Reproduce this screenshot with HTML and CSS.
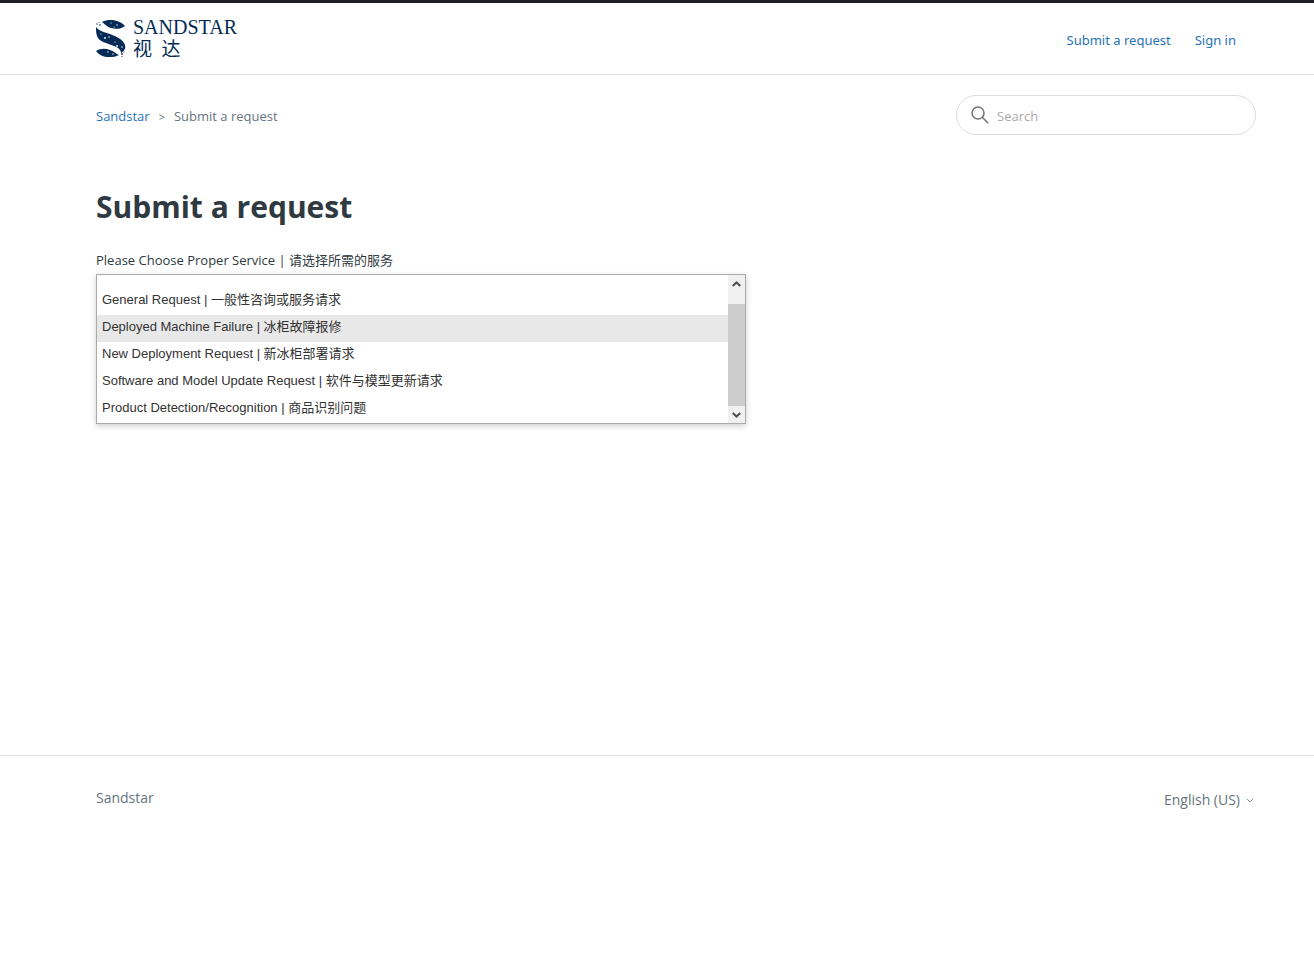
FILE: index.html
```
<!DOCTYPE html>
<html lang="en">
<head>
    <meta charset="UTF-8">
    <meta name="viewport" content="width=device-width, initial-scale=1.0">
    <title>Submit a request</title>
    <link rel="stylesheet" href="styles.css">
</head>
<body>

    <header class="header">
        <a class="logo" href="#" aria-label="Sandstar home">
            <svg class="logo-mark" viewBox="0 0 30 38" width="30" height="38" aria-hidden="true">
                <g fill="#052c56">
                    <path d="M6 2C10 0 15 -.3 19 .5C24 1.5 27 3.500 29 6C25 9 20 9.500 15 8C11 7 9 4 6 2Z"/>
                    <path d="M0 7C2 10 7 12 14 14C22 17 27 20 29 25C30 29 28 31 25 33C25 30 23 28 18 26C11 23 3 22 1 16C0 13 0 10 0 7Z"/>
                    <path d="M0 31C4 28.500 9 28 14 30C18 31 20 34 23 35C18 37.500 12 37.500 8 36.500C4 35.500 2 33.500 0 31Z"/>
                    <circle cx="1" cy="4" r=".7"/>
                    <circle cx="4" cy="5" r=".8"/>
                    <circle cx="3" cy="2.500" r=".5"/>
                    <circle cx="26" cy="34" r=".9"/>
                    <circle cx="28" cy="32" r=".6"/>
                    <circle cx="26" cy="36.500" r=".6"/>
                </g>
                <g fill="#fff">
                    <circle cx="15" cy="3" r=".6"/>
                    <circle cx="21" cy="5" r=".7"/>
                    <circle cx="18" cy="7" r=".5"/>
                    <circle cx="5" cy="14" r=".6"/>
                    <circle cx="9" cy="18" r=".9"/>
                    <circle cx="13" cy="17" r=".7"/>
                    <circle cx="19" cy="22" r=".6"/>
                    <circle cx="21" cy="26" r=".9"/>
                    <circle cx="26" cy="27" r=".7"/>
                    <circle cx="12" cy="32" r=".7"/>
                    <circle cx="17" cy="34" r=".7"/>
                </g>
            </svg>
            <span class="logo-text">
                <span class="logo-name">SANDSTAR</span>
                <span class="logo-name-cn" lang="zh">视&ensp;达</span>
            </span>
        </a>
        <nav class="user-nav">
            <a href="#">Submit a request</a>
            <a href="#">Sign in</a>
        </nav>
    </header>

    <main class="main">
        <div class="sub-nav">
            <ol class="breadcrumbs">
                <li><a href="#">Sandstar</a></li>
                <li>Submit a request</li>
            </ol>
            <form class="search" role="search">
                <svg viewBox="0 0 18 18" width="18" height="18" fill="none" stroke="#777" stroke-width="1.6" aria-hidden="true">
                    <circle cx="7" cy="7" r="6"/>
                    <path d="M11.3 11.3L17.2 17.2"/>
                </svg>
                <input type="search" placeholder="Search" aria-label="Search">
            </form>
        </div>

        <h1>Submit a request</h1>

        <form class="request-form">
            <label for="service">Please Choose Proper Service | <span lang="zh">请选择所需的服务</span></label>
            <div class="listbox">
                <select id="service" size="5">
                    <option>General Request | 一般性咨询或服务请求</option>
                    <option class="highlighted">Deployed Machine Failure | 冰柜故障报修</option>
                    <option>New Deployment Request | 新冰柜部署请求</option>
                    <option>Software and Model Update Request | 软件与模型更新请求</option>
                    <option>Product Detection/Recognition | 商品识别问题</option>
                </select>
                <div class="scrollbar">
                    <button type="button" aria-label="Scroll up">
                        <svg viewBox="0 0 9 6" width="9" height="6" fill="none" stroke="#505050" stroke-width="2"><path d="M.7 5L4.5 1.4L8.3 5"/></svg>
                    </button>
                    <div class="thumb"></div>
                    <button type="button" aria-label="Scroll down">
                        <svg viewBox="0 0 9 6" width="9" height="6" fill="none" stroke="#505050" stroke-width="2"><path d="M.7 1L4.5 4.6L8.3 1"/></svg>
                    </button>
                </div>
            </div>
        </form>
    </main>

    <footer class="footer">
        <a href="#">Sandstar</a>
        <button class="language" type="button" aria-haspopup="true">
            English (US)
            <svg viewBox="0 0 8 5" width="8" height="5" fill="none" stroke="#87929d" aria-hidden="true"><path d="M.8 .8L4 4L7.2 .8"/></svg>
        </button>
    </footer>

</body>
</html>
```

FILE: styles.css
```
* {
    box-sizing: border-box;
}

body {
    margin: 0;
    min-height: 100vh;
    border-top: 3px solid #211f26;
    background-color: #fff;
    color: #2f3941;
    font-family: "Open Sans", "Noto Sans CJK SC", sans-serif;
    font-size: 13px;
    line-height: 20px;
}

a {
    color: #1f73b7;
    text-decoration: none;
}

a:hover {
    text-decoration: underline;
}

/* Header */
.header {
    display: flex;
    align-items: center;
    justify-content: space-between;
    height: 72px;
    padding: 0 78px 0 96px;
    border-bottom: 1px solid #ddd;
}

.logo {
    display: flex;
    align-items: center;
    gap: 7px;
    color: #052c56;
}

.logo-text {
    display: flex;
    flex-direction: column;
}

.logo-name {
    font-family: "Liberation Serif", serif;
    font-size: 20px;
    line-height: 18px;
}

.logo-name-cn {
    font-family: "Noto Sans CJK SC", sans-serif;
    font-size: 19px;
    line-height: 24px;
}

.user-nav {
    display: flex;
    gap: 24px;
    padding-top: 2px;
    font-family: "Noto Sans", sans-serif;
}

/* Breadcrumbs and search */
.main {
    min-height: 680px;
    padding: 20px 58px 0 96px;
}

.sub-nav {
    display: flex;
    align-items: center;
    justify-content: space-between;
    margin-bottom: 48px;
}

.breadcrumbs {
    display: flex;
    margin: 0;
    padding: 2px 0 0;
    list-style: none;
    color: #68737d;
}

.breadcrumbs li + li::before {
    content: ">";
    margin: 0 9px;
    font-size: 11px;
}

.search {
    display: flex;
    align-items: center;
    gap: 8px;
    width: 300px;
    height: 40px;
    padding: 0 14px;
    border: 1px solid #ddd;
    border-radius: 20px;
}

.search input {
    flex: 1;
    min-width: 0;
    padding: 2px 0 0;
    border: 0;
    outline: none;
    background: none;
    font: inherit;
}

.search input::placeholder {
    color: #aaa;
}

h1 {
    margin: 0 0 19px;
    font-size: 30px;
    font-weight: 700;
    line-height: 48px;
}

/* Request form */
.request-form {
    max-width: 650px;
}

.request-form label {
    display: block;
    margin-bottom: 4px;
}

.listbox {
    display: flex;
    border: 1px solid #aaa;
    box-shadow: 0 2px 6px rgba(0, 0, 0, 0.2);
}

.listbox select {
    flex: 1;
    min-width: 0;
    height: 148px;
    padding: 13px 0 0;
    overflow: hidden;
    border: 0;
    border-radius: 0;
    outline: none;
    background-color: #fff;
    color: #333;
    font-family: "Liberation Sans", "Noto Sans CJK SC", sans-serif;
    font-size: 13px;
}

.listbox option {
    height: 27px;
    min-height: 27px;
    padding: 1px 5px 0;
    line-height: 24px;
}

.listbox .highlighted {
    background-color: #e8e8e8;
}

.scrollbar {
    display: flex;
    flex-direction: column;
    width: 17px;
    background-color: #f0f0f0;
}

.scrollbar button {
    display: flex;
    align-items: center;
    justify-content: center;
    height: 17px;
    padding: 0;
    border: 0;
    background: none;
}

.thumb {
    flex: 1;
    margin-top: 12px;
    background-color: #cdcdcd;
}

/* Footer */
.footer {
    display: flex;
    align-items: flex-start;
    justify-content: space-between;
    padding: 32px 60px 32px 96px;
    border-top: 1px solid #ddd;
    font-size: 14px;
}

.footer a,
.language {
    color: #68737d;
}

.language {
    display: flex;
    align-items: center;
    gap: 6px;
    padding: 2px 0 0;
    border: 0;
    background: none;
    font: inherit;
    cursor: pointer;
}
```
